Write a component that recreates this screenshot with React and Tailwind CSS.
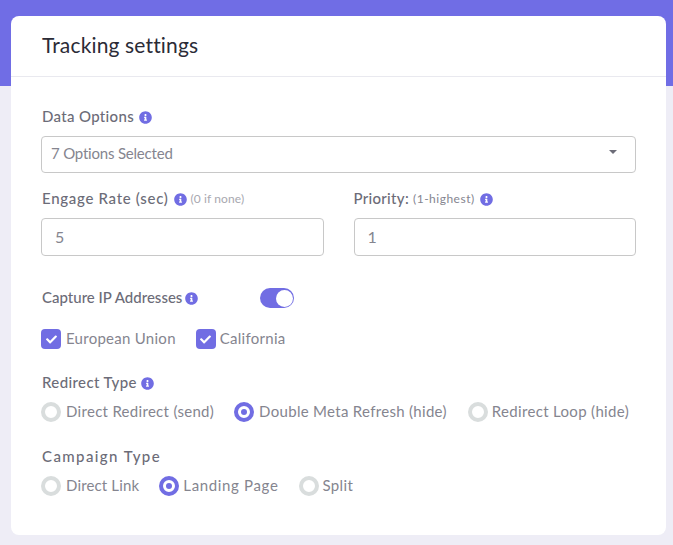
import { FaInfoCircle, FaCheck } from "react-icons/fa";

function Info({ className = "" }) {
  return <FaInfoCircle className={`translate-y-px text-[13px] text-[#716de3] ${className}`} />;
}

function Label({ children, className = "" }) {
  return <div className={`flex h-5 items-center pb-[2px] text-[15px] leading-[20px] font-medium text-[#6c6c78] ${className}`}>{children}</div>;
}

function Radio({ checked, label, className = "", labelClass = "ml-[5px] tracking-[0.3px]" }) {
  return (
    <div className={`flex items-center ${className}`}>
      {checked ? (
        <span className="flex h-5 w-5 items-center justify-center rounded-full border-[4px] border-[#716de3] bg-white">
          <span className="h-1.5 w-1.5 rounded-full bg-[#716de3]"></span>
        </span>
      ) : (
        <span className="h-5 w-5 rounded-full border-[4px] border-[#d9dddd] bg-white"></span>
      )}
      <span className={`-translate-y-px text-[15px] leading-[20px] text-[#85858f] ${labelClass}`}>{label}</span>
    </div>
  );
}

function Check({ label, className = "", labelClass = "ml-[5px]" }) {
  return (
    <div className={`flex items-center ${className}`}>
      <span className="flex h-5 w-5 items-center justify-center rounded-[4px] bg-[#716de3] text-white">
        <FaCheck className="text-[11px]" />
      </span>
      <span className={`-translate-y-px text-[15px] leading-[20px] tracking-[0.27px] text-[#85858f] ${labelClass}`}>{label}</span>
    </div>
  );
}

export default function App() {
  return (
    <div className="h-[545px] overflow-hidden bg-[linear-gradient(#706de5_86px,#eeedf6_86px)] pl-[11px] pr-[7px] pt-4 font-['Lato','Noto_Sans',sans-serif]">
      <div className="h-[519px] rounded-[8px] bg-white">
        <div className="h-[61px] border-b border-[#e9e9ef] pl-[31px] pt-[16px] text-[21px] leading-[26px] tracking-[0.15px] text-[#2b2b36]">
          Tracking settings
        </div>
        <div className="px-[30px] pt-[30px]">
          <Label className="pl-px tracking-[0.33px]">
            Data Options <Info className="ml-[5px]" />
          </Label>
          <div className="mt-[9px] flex h-[37px] items-center justify-between rounded-[4px] border border-[#c8c8c8] pb-0.5 pl-[9px] pr-[18px] text-[15px] tracking-[-0.2px] text-[#85858f]">
            <span>7 Options Selected</span>
            <span className="mb-1 h-0 w-0 border-x-[4px] border-t-[4px] border-x-transparent border-t-[#6c6c78]"></span>
          </div>
          <div className="mt-[16px] grid grid-cols-2 gap-[30px]">
            <div>
              <Label className="pl-px tracking-[0.7px]">
                Engage Rate (sec) <Info className="ml-[5px]" />
                <span className="ml-[4px] translate-y-px text-[12px] font-normal tracking-[0.1px] text-[#a8a8b0]">(0 if none)</span>
              </Label>
              <div className="mt-[9px] flex h-[38px] items-center rounded-[4px] border border-[#c8c8c8] pl-[13px] text-[16px] text-[#85858f]">5</div>
            </div>
            <div>
              <Label className="tracking-[0.3px]">
                Priority:
                <span className="ml-1 translate-y-px text-[12px] font-normal tracking-[0.5px] text-[#85858f]">(1-highest)</span>
                <Info className="ml-[5px]" />
              </Label>
              <div className="mt-[9px] flex h-[38px] items-center rounded-[4px] border border-[#c8c8c8] pl-[13px] text-[16px] text-[#85858f]">1</div>
            </div>
          </div>
          <div className="mt-[32px] flex items-center">
            <Label className="w-[219px] pl-px">
              Capture IP Addresses <Info className="ml-[3px]" />
            </Label>
            <span className="flex h-5 w-[34px] items-center justify-end rounded-full bg-[#716de3] pr-px">
              <span className="h-[17px] w-[17px] rounded-full bg-white"></span>
            </span>
          </div>
          <div className="mt-[21px] flex">
            <Check label="European Union" />
            <Check label="California" className="ml-[20px]" labelClass="ml-[4px]" />
          </div>
          <Label className="mt-[24px] pl-px tracking-[0.38px]">
            Redirect Type <Info className="ml-1" />
          </Label>
          <div className="mt-[9px] flex">
            <Radio label="Direct Redirect (send)" />
            <Radio checked label="Double Meta Refresh (hide)" className="ml-[20px]" />
            <Radio label="Redirect Loop (hide)" className="ml-[21px]" labelClass="ml-[4px] tracking-[0.33px]" />
          </div>
          <Label className="mt-[25px] pl-px tracking-[1.4px]">Campaign Type</Label>
          <div className="mt-[9px] flex">
            <Radio label="Direct Link" labelClass="ml-[5px] tracking-[0.15px]" />
            <Radio checked label="Landing Page" className="ml-[20px]" labelClass="ml-[4px] tracking-[0.66px]" />
            <Radio label="Split" className="ml-[20px]" labelClass="ml-[4px] tracking-[0.33px]" />
          </div>
        </div>
      </div>
    </div>
  );
}
